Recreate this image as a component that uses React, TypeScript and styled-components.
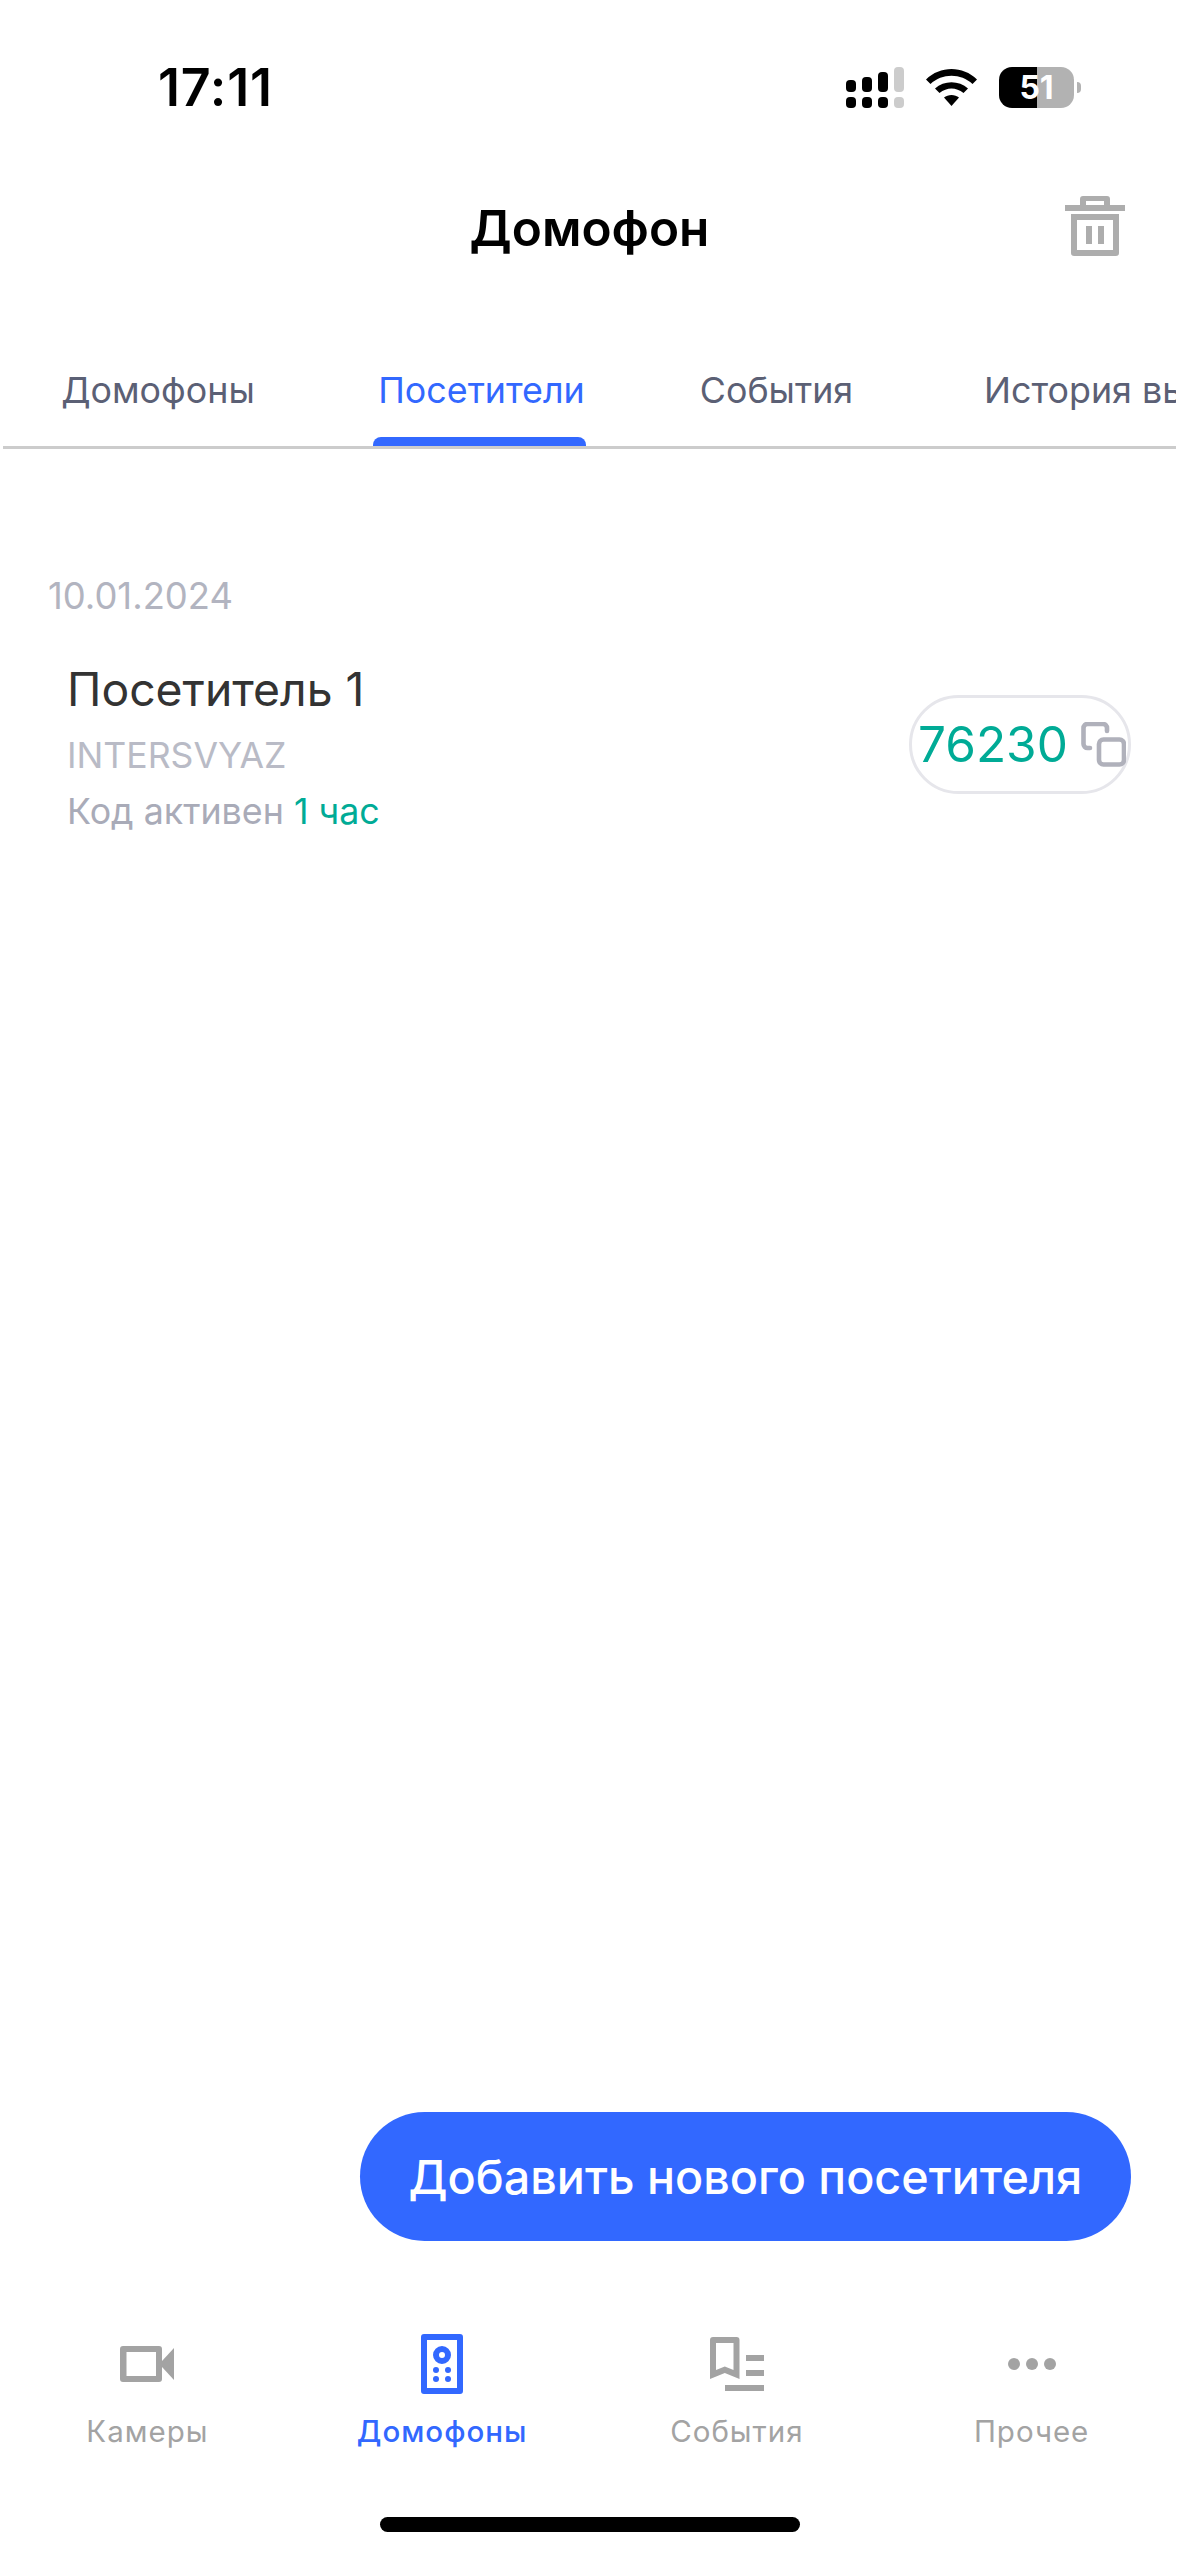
import React from 'react';
import styled, { createGlobalStyle } from 'styled-components';

const GlobalStyle = createGlobalStyle`
  html, body {
    margin: 0;
    padding: 0;
    background: #fff;
  }
  * {
    box-sizing: border-box;
  }
`;

const Screen = styled.div`
  width: 1179px;
  height: 2556px;
  display: flex;
  flex-direction: column;
  background: #fff;
  font-family: 'Inter', 'Noto Sans', sans-serif;
  overflow: hidden;
`;

const StatusBar = styled.div`
  height: 198px;
  display: flex;
  align-items: flex-start;
  justify-content: space-between;
  padding: 67px 98px 0 158px;
`;

const Clock = styled.span`
  font-size: 52px;
  line-height: 41px;
  font-weight: 600;
  letter-spacing: 0.8px;
  color: #000;
`;

const StatusIcons = styled.div`
  display: flex;
  align-items: center;
  height: 41px;
`;

const SignalIcon = styled.svg`
  margin-right: 22px;
`;

const WifiIcon = styled.svg`
  margin-right: 22px;
`;

const Battery = styled.div`
  position: relative;
  width: 75px;
  height: 41px;
  border-radius: 13px;
  background: linear-gradient(90deg, #000 0 38px, #b2b2b2 38px 100%);
  display: flex;
  align-items: center;
  justify-content: center;
  color: #fff;
  font-size: 32px;
  font-weight: 700;
  margin-right: 7px;

  &::after {
    content: '';
    position: absolute;
    left: 78px;
    top: 15px;
    width: 4px;
    height: 11px;
    border-radius: 0 6px 6px 0;
    background: #b2b2b2;
  }
`;

const Header = styled.div`
  height: 60px;
  display: flex;
  align-items: center;
  justify-content: center;
  position: relative;
`;

const Title = styled.h1`
  margin: 0;
  font-size: 49.5px;
  line-height: 60px;
  font-weight: 600;
  color: #000;
`;

const TrashButton = styled.svg`
  position: absolute;
  right: 54px;
  top: -2px;
`;

const Tabs = styled.div`
  margin: 101px 3px 0 3px;
  height: 90px;
  display: flex;
  border-bottom: 3px solid #cccccc;
  overflow: hidden;
`;

const Tab = styled.div<{ $width: number; $start?: number }>`
  flex: 0 0 ${(props) => props.$width}px;
  display: flex;
  justify-content: ${(props) => (props.$start ? 'flex-start' : 'center')};
  padding-left: ${(props) => props.$start || 0}px;
  white-space: nowrap;
  height: 87px;
`;

const TabLabel = styled.span<{ $active?: boolean }>`
  position: relative;
  height: 100%;
  font-size: 35.8px;
  line-height: 62px;
  color: ${(props) => (props.$active ? '#3268ff' : '#5b6075')};

  ${(props) =>
    props.$active &&
    `&::after {
      content: '';
      position: absolute;
      left: -5px;
      right: -1px;
      bottom: 0;
      height: 9px;
      border-radius: 8px 8px 0 0;
      background: #3268ff;
    }`}
`;

const Content = styled.div`
  flex: 1;
  display: flex;
  flex-direction: column;
  padding: 126px 48px 0 48px;
`;

const DateLabel = styled.div`
  font-size: 36.4px;
  line-height: 42px;
  color: #b2b4c0;
`;

const VisitorRow = styled.div`
  margin-top: 45px;
  padding-left: 19px;
  display: flex;
  align-items: center;
  justify-content: space-between;
`;

const VisitorInfo = styled.div`
  display: flex;
  flex-direction: column;
`;

const VisitorName = styled.div`
  font-size: 46.3px;
  line-height: 54px;
  color: #333333;
`;

const Company = styled.div`
  margin-top: 19px;
  font-size: 35.6px;
  line-height: 42px;
  color: #b9bbc6;
`;

const ActiveLine = styled.div`
  margin-top: 13px;
  font-size: 35.8px;
  line-height: 42px;
  color: #a9abb8;
`;

const Accent = styled.span`
  color: #00ab96;
`;

const CodePill = styled.div`
  margin-bottom: 6px;
  width: 222px;
  height: 99px;
  border: 3px solid #e6e6eb;
  border-radius: 50px;
  display: flex;
  align-items: center;
  padding-left: 6px;
`;

const CodeText = styled.span`
  font-size: 49.5px;
  line-height: 60px;
  color: #00ab96;
  margin-right: 13px;
`;

const CopyIcon = styled.svg`
  flex: none;
`;

const AddButton = styled.button`
  margin: auto 48px 0 auto;
  width: 771px;
  height: 129px;
  border: none;
  border-radius: 65px;
  background: #3268ff;
  color: #fff;
  font-family: inherit;
  font-size: 46.7px;
  font-weight: 500;
  padding: 0;
`;

const BottomNav = styled.nav`
  margin-top: 93px;
  height: 122px;
  display: grid;
  grid-template-columns: repeat(4, 1fr);
`;

const NavItem = styled.div<{ $active?: boolean }>`
  display: flex;
  flex-direction: column;
  align-items: center;
  color: ${(props) => (props.$active ? '#3268ff' : '#a3a3a3')};
`;

const NavIconSlot = styled.div`
  height: 60px;
  display: flex;
  align-items: center;
  justify-content: center;
`;

const NavLabel = styled.span<{ $active?: boolean }>`
  margin-top: 17px;
  font-size: 29.5px;
  line-height: 40px;
  letter-spacing: 1px;
  font-weight: ${(props) => (props.$active ? 500 : 400)};
`;

const HomeBar = styled.div`
  margin: 61px 0 24px 380px;
  width: 420px;
  height: 15px;
  border-radius: 8px;
  background: #000;
`;

const tabs = [
  { label: 'Домофоны', width: 310 },
  { label: 'Посетители', width: 337, active: true },
  { label: 'События', width: 253 },
  { label: 'История вызовов', width: 400, start: 81 },
];

const signalTop = [
  { x: 0, y: 13, h: 12, fill: '#000' },
  { x: 16, y: 10, h: 15, fill: '#000' },
  { x: 32, y: 5, h: 20, fill: '#000' },
  { x: 48, y: 0, h: 25, fill: '#cccccc' },
];

const Signal = () => (
  <SignalIcon width="58" height="41" viewBox="0 0 58 41">
    {signalTop.map((bar) => (
      <React.Fragment key={bar.x}>
        <rect x={bar.x} y={bar.y} width="10" height={bar.h} rx="4" fill={bar.fill} />
        <rect x={bar.x} y="30" width="10" height="11" rx="4" fill={bar.fill} />
      </React.Fragment>
    ))}
  </SignalIcon>
);

const Wifi = () => (
  <WifiIcon width="51" height="37" viewBox="0 0 51 37" fill="#000">
    <path d="M0 10.5C14-3.5 37-3.5 51 10.5L46.5 15C35 4 16 4 4.5 15Z" />
    <path d="M9 19.5C18 11 33 11 42 19.5L37.5 24C30 18 21 18 13.5 24Z" />
    <path d="M18 28.5C22 25 29 25 33 28.5L25.5 37Z" />
  </WifiIcon>
);

const Trash = () => (
  <TrashButton width="60" height="60" viewBox="0 0 60 60" fill="#adadad">
    <path d="M15 10V3a3 3 0 0 1 3-3h24a3 3 0 0 1 3 3v7h-6V5H21v5Z" />
    <rect x="0" y="9" width="60" height="6" />
    <path fillRule="evenodd" d="M6 18h48v39a3 3 0 0 1-3 3H9a3 3 0 0 1-3-3ZM12 24v30h36V24Z" />
    <rect x="21" y="30" width="6" height="18" />
    <rect x="33" y="30" width="6" height="18" />
  </TrashButton>
);

const Copy = () => (
  <CopyIcon width="45" height="45" viewBox="0 0 45 45" fill="none" stroke="#b0b1bb" strokeWidth="4.6">
    <path d="M26 9V6a4 4 0 0 0-4-4H6.500a4 4 0 0 0-4 4v16a4 4 0 0 0 4 4H9" strokeLinecap="round" />
    <rect x="18" y="17.500" width="25" height="25" rx="4.500" />
  </CopyIcon>
);

const CameraIcon = () => (
  <svg width="54" height="36" viewBox="0 0 54 36" fill="currentColor">
    <path fillRule="evenodd" d="M3 0h36a3 3 0 0 1 3 3v30a3 3 0 0 1-3 3H3a3 3 0 0 1-3-3V3a3 3 0 0 1 3-3ZM6.500 6v24H36V6Z" />
    <path d="M42 15 54 2v32L42 21Z" />
  </svg>
);

const RemoteIcon = () => (
  <svg width="42" height="60" viewBox="0 0 42 60" fill="currentColor">
    <path fillRule="evenodd" d="M3 0h36a3 3 0 0 1 3 3v54a3 3 0 0 1-3 3H3a3 3 0 0 1-3-3V3a3 3 0 0 1 3-3ZM6 6v48h30V6Z" />
    <path fillRule="evenodd" d="M21 12a9 9 0 1 1 0 18 9 9 0 0 1 0-18Zm0 6a3 3 0 1 0 0 6 3 3 0 0 0 0-6Z" />
    <circle cx="15" cy="36" r="3" />
    <circle cx="27" cy="36" r="3" />
    <circle cx="15" cy="45" r="3" />
    <circle cx="27" cy="45" r="3" />
  </svg>
);

const EventsIcon = () => (
  <svg width="54" height="54" viewBox="0 0 54 54" fill="currentColor">
    <path fillRule="evenodd" d="M3 0h23.500a3 3 0 0 1 3 3v39L14.800 36 0 42V3a3 3 0 0 1 3-3ZM6 6v27l8.800-3.500 8.700 3.500V6Z" />
    <rect x="36" y="18" width="18" height="6" />
    <rect x="36" y="33" width="18" height="6" />
    <rect x="15" y="48" width="39" height="6" />
  </svg>
);

const MoreIcon = () => (
  <svg width="48" height="12" viewBox="0 0 48 12" fill="currentColor">
    <circle cx="6" cy="6" r="6" />
    <circle cx="24" cy="6" r="6" />
    <circle cx="42" cy="6" r="6" />
  </svg>
);

const navItems = [
  { label: 'Камеры', icon: <CameraIcon /> },
  { label: 'Домофоны', icon: <RemoteIcon />, active: true },
  { label: 'События', icon: <EventsIcon /> },
  { label: 'Прочее', icon: <MoreIcon /> },
];

export default function App() {
  return (
    <Screen>
      <GlobalStyle />
      <StatusBar>
        <Clock>17:11</Clock>
        <StatusIcons>
          <Signal />
          <Wifi />
          <Battery>51</Battery>
        </StatusIcons>
      </StatusBar>
      <Header>
        <Title>Домофон</Title>
        <Trash />
      </Header>
      <Tabs>
        {tabs.map((tab) => (
          <Tab key={tab.label} $width={tab.width} $start={tab.start}>
            <TabLabel $active={tab.active}>{tab.label}</TabLabel>
          </Tab>
        ))}
      </Tabs>
      <Content>
        <DateLabel>10.01.2024</DateLabel>
        <VisitorRow>
          <VisitorInfo>
            <VisitorName>Посетитель 1</VisitorName>
            <Company>INTERSVYAZ</Company>
            <ActiveLine>
              Код активен <Accent>1 час</Accent>
            </ActiveLine>
          </VisitorInfo>
          <CodePill>
            <CodeText>76230</CodeText>
            <Copy />
          </CodePill>
        </VisitorRow>
      </Content>
      <AddButton>Добавить нового посетителя</AddButton>
      <BottomNav>
        {navItems.map((item) => (
          <NavItem key={item.label} $active={item.active}>
            <NavIconSlot>{item.icon}</NavIconSlot>
            <NavLabel $active={item.active}>{item.label}</NavLabel>
          </NavItem>
        ))}
      </BottomNav>
      <HomeBar />
    </Screen>
  );
}
